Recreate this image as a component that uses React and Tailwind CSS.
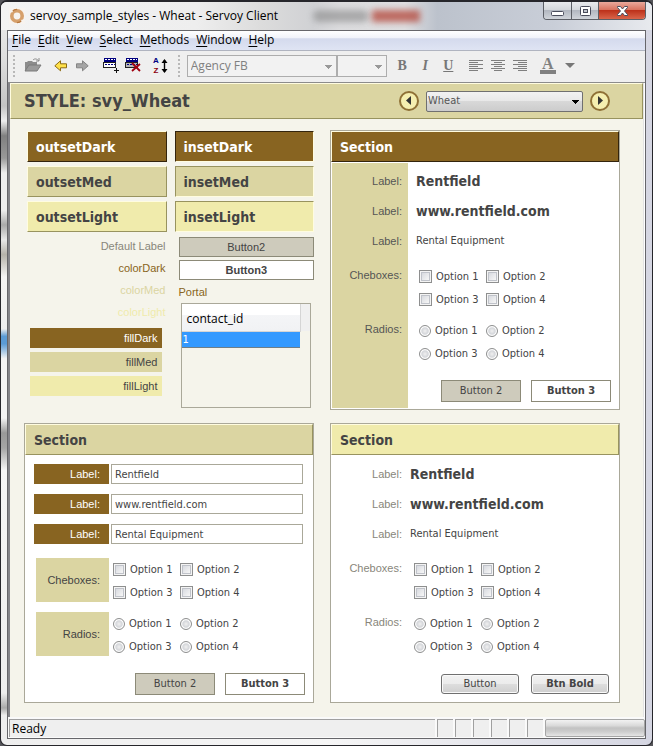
import { useState } from 'react';
import clsx from 'clsx';

const MENUS = ['File', 'Edit', 'View', 'Select', 'Methods', 'Window', 'Help'];
const OPTIONS = ['Option 1', 'Option 2', 'Option 3', 'Option 4'];

const FIELDS = [
  { name: 'name', value: 'Rentfield', big: true },
  { name: 'site', value: 'www.rentfield.com', big: true },
  { name: 'type', value: 'Rental Equipment', big: false },
];

const UI_FONT = "font-['Open_Sans','Noto_Sans',sans-serif]";
const TAHOMA = "font-['DejaVu_Sans_Condensed','DejaVu_Sans',sans-serif]";
const ARIAL = "font-['Liberation_Sans',Arial,sans-serif]";

const OUTSET = {
  dark: 'bg-[#886421] text-white border-t-[#fffce0] border-l-[#fffce0] border-b-[#33240d] border-r-[#33240d]',
  med: 'bg-[#dbd5a2] text-[#444] border-t-[#fffce0] border-l-[#fffce0] border-b-[#98935f] border-r-[#98935f]',
  light: 'bg-[#f0ebac] text-[#444] border-t-[#fffce0] border-l-[#fffce0] border-b-[#98935f] border-r-[#98935f]',
};

const INSET = {
  dark: 'bg-[#886421] text-white border-b-[#fffce0] border-r-[#fffce0] border-t-[#33240d] border-l-[#33240d]',
  med: 'bg-[#dbd5a2] text-[#444] border-b-[#fffce0] border-r-[#fffce0] border-t-[#98935f] border-l-[#98935f]',
  light: 'bg-[#f0ebac] text-[#444] border-b-[#fffce0] border-r-[#fffce0] border-t-[#98935f] border-l-[#98935f]',
};

const Caret = ({ className }) => (
  <svg viewBox="0 0 8 4" className={clsx('w-2 h-1', className)} fill="currentColor" shapeRendering="crispEdges">
    <path d="M0 0h8L4 4z" />
  </svg>
);

const Grip = () => (
  <svg width="3" height="22" fill="#b8b8b8" shapeRendering="crispEdges" className="shrink-0">
    {[0, 4, 8, 12, 16, 20].map((y) => <rect key={y} x="0" y={y} width="2" height="2" />)}
  </svg>
);

const ToolButton = ({ label, children, className }) => (
  <button type="button" aria-label={label} className={clsx('shrink-0 flex items-center justify-center', className)}>
    {children}
  </button>
);

const TitleBar = () => (
  <div className="h-7 flex items-start justify-between pl-2 pr-[6px] rounded-t-[6px] bg-[linear-gradient(90deg,#f3f3f3_0%,#eeeeee_30%,#dcdcdc_40%,#d0d1d4_48%,#dcdcde_52%,#dedee0_62%,#bcc2cc_67%,#c9ced8_85%,#e8eaee_100%)] relative overflow-hidden">
    {/* glass blur of whatever is behind the window */}
    <div className="absolute left-[48%] top-2 w-14 h-3 rounded-full bg-[#777] opacity-50 blur-[3px]" />
    <div className="absolute left-[57%] top-2 w-12 h-3 bg-[#b03a2c] opacity-70 blur-[3px]" />
    <div className="relative flex items-center gap-[5px] h-[27px]">
      <svg width="16" height="16" viewBox="0 0 16 16">
        <rect width="16" height="16" fill="#f7f3ef" />
        <circle cx="8" cy="8" r="5.2" fill="none" stroke="#d6a06c" strokeWidth="3.6" />
        <path d="M3.2 3.4A6.6 6.6 0 0 1 8 1.4M12.8 12.6A6.6 6.6 0 0 1 8 14.6" fill="none" stroke="#b87a42" strokeWidth="1.2" />
        <path d="M0 5l3-4 1 3zM16 11l-3 4-1-3z" fill="#f7f3ef" />
      </svg>
      <span className={clsx(UI_FONT, 'text-xs text-black whitespace-nowrap')}>servoy_sample_styles - Wheat - Servoy Client</span>
    </div>
    <div className="relative flex h-[18px] border border-t-0 border-[#5c5f66] rounded-b-[4px] overflow-hidden">
      <button type="button" aria-label="Minimize" className="w-7 flex items-center justify-center border-r border-[#5c5f66] bg-[linear-gradient(#e9ebee_0%,#d3d6db_48%,#b3b8c1_50%,#d0d4da_100%)]">
        <svg width="13" height="12" viewBox="0 0 13 12"><rect x=".5" y="6.5" width="12" height="4" rx="1" fill="#fff" stroke="#4a4d5c" /></svg>
      </button>
      <button type="button" aria-label="Maximize" className="w-[27px] flex items-center justify-center border-r border-[#5c5f66] bg-[linear-gradient(#e9ebee_0%,#d3d6db_48%,#b3b8c1_50%,#d0d4da_100%)]">
        <svg width="13" height="12" viewBox="0 0 13 12">
          <rect x="1.5" y="1.5" width="10" height="9" rx="1" fill="#fff" stroke="#4a4d5c" />
          <rect x="4.5" y="4.5" width="4" height="3" fill="#c0c4cc" stroke="#4a4d5c" />
        </svg>
      </button>
      <button type="button" aria-label="Close" className="w-[46px] flex items-center justify-center bg-[linear-gradient(#e9a99c_0%,#d7705c_48%,#bd321b_50%,#d9654a_100%)]">
        <svg width="13" height="12" viewBox="0 0 13 12">
          <path d="M1.5 1.5h3L6.500 4l2-2.500h3v1L8.500 6l3 3.500v1h-3L6.500 8l-2 2.500h-3v-1L4.500 6l-3-3.500z" fill="#fff" stroke="#4a4d5c" />
        </svg>
      </button>
    </div>
  </div>
);

const MenuBar = () => (
  <nav className={clsx(UI_FONT, 'h-5 flex items-center gap-[7px] px-1 pb-px text-xs text-black border-b border-[#b0b4c0] bg-[linear-gradient(#ffffff_0%,#f0f2f9_38%,#d4daed_40%,#dfe4f3_100%)]')}>
    {MENUS.map((menu) => (
      <button key={menu} type="button" className="leading-4">
        <span className="underline underline-offset-2">{menu[0]}</span>{menu.slice(1)}
      </button>
    ))}
  </nav>
);

const AlignIcon = ({ rows }) => (
  <svg width="14" height="12" stroke="#7f7f7f" shapeRendering="crispEdges">
    {rows.map(([x1, x2], i) => <path key={i} d={`M${x1} ${i * 2 + 0.5}H${x2}`} />)}
  </svg>
);

const FormIcon = ({ remove }) => (
  <svg width="17" height="16" viewBox="0 0 17 16" shapeRendering="crispEdges">
    <rect x="2" y="0" width="12" height="4" fill="#000080" />
    <path d="M3 1.500h10" stroke="#fff" strokeDasharray="2 1" />
    <rect x="1.500" y="4.500" width="12" height="5" fill={remove ? '#b8b8b8' : '#fff'} stroke="#222" />
    <path d="M3 6.500h10" stroke="#000080" strokeDasharray="2 1" />
    {remove
      ? <path d="M8 5l8 8M16 6l-8 7" stroke="#a00010" strokeWidth="1.800" shapeRendering="auto" />
      : <path d="M14.500 10v5M12 12.500h5" stroke="#111" />}
  </svg>
);

const Toolbar = () => (
  <div className="h-8 flex items-center pl-[5px] pb-[2px] bg-[#efefef] border-b border-[#8c8c8c]">
    <Grip />
    <ToolButton label="Open" className="ml-2">
      <svg width="18" height="15" viewBox="0 0 18 15">
        <path d="M1 13V4h2l1-1h4l1 1h4v3" fill="#8c8c8c" />
        <path d="M1 13L5 7h12l-4 6z" fill="#9a9a9a" stroke="#7b7b7b" />
        <path d="M9 2c2-2 4-1 6 1M15 0v3h-3" fill="none" stroke="#8c8c8c" />
      </svg>
    </ToolButton>
    <ToolButton label="Back" className="ml-3">
      <svg width="13" height="12" viewBox="0 0 13 12">
        <path d="M6.500.8v3h6v4h-6v3L.8 5.800z" fill="#ffe14a" stroke="#8a6a14" />
      </svg>
    </ToolButton>
    <ToolButton label="Forward" className="ml-[9px]">
      <svg width="13" height="12" viewBox="0 0 13 12">
        <path d="M6.500.8v3h-6v4h6v3l5.700-5z" fill="#a5a5a5" stroke="#848484" />
      </svg>
    </ToolButton>
    <ToolButton label="New record" className="ml-[13px]"><FormIcon /></ToolButton>
    <ToolButton label="Delete record" className="ml-[5px]"><FormIcon remove /></ToolButton>
    <ToolButton label="Sort" className="ml-3 gap-[2px]">
      <span className={clsx(ARIAL, 'flex flex-col text-[8px] leading-[10px] font-bold')}>
        <span className="text-[#000080]">A</span>
        <span className="text-[#8b0010]">Z</span>
      </span>
      <svg width="7" height="16" viewBox="0 0 7 16">
        <path d="M3.500 2v12" stroke="#000" strokeWidth="1.400" />
        <path d="M.5 5l3-4 3 4zM.5 11l3 4 3-4z" fill="#000" />
      </svg>
    </ToolButton>
    <div className="ml-[10px] flex"><Grip /></div>
    <div className="relative ml-[6px] flex-[0_1_150px] min-w-0">
      <select aria-label="Font" disabled className={clsx(UI_FONT, 'block appearance-none w-full h-[22px] pl-[3px] text-xs leading-4 text-[#808080] bg-[#f2f2f2] border border-[#adadad] opacity-100')}>
        <option>Agency FB</option>
      </select>
      <Caret className="absolute right-[5px] top-[10px] text-[#999]" />
    </div>
    <div className="relative flex-[0_1_50px] min-w-0">
      <select aria-label="Font size" disabled className="block appearance-none w-full h-[22px] bg-[#f2f2f2] border border-[#adadad] opacity-100">
        <option> </option>
      </select>
      <Caret className="absolute right-[5px] top-[10px] text-[#999]" />
    </div>
    <div className="flex items-center ml-[10px] gap-3 font-['Liberation_Serif',serif] text-sm leading-4 font-bold text-[#777]">
      <ToolButton label="Bold" className="w-[11px]">B</ToolButton>
      <ToolButton label="Italic" className="w-[11px] italic">I</ToolButton>
      <ToolButton label="Underline" className="w-[11px] underline">U</ToolButton>
    </div>
    <div className="flex items-center ml-[15px] gap-2">
      <ToolButton label="Align left"><AlignIcon rows={[[0, 14], [0, 9], [0, 14], [0, 9], [0, 14], [0, 9]]} /></ToolButton>
      <ToolButton label="Align center"><AlignIcon rows={[[0, 14], [3, 11], [0, 14], [3, 11], [0, 14], [3, 11]]} /></ToolButton>
      <ToolButton label="Align right"><AlignIcon rows={[[0, 14], [5, 14], [0, 14], [5, 14], [0, 14], [5, 14]]} /></ToolButton>
    </div>
    <ToolButton label="Text color" className="ml-[13px] w-4 h-4 border-b-4 border-[#808080] font-['Liberation_Serif',serif] text-base leading-3 font-bold text-[#808080]">A</ToolButton>
    <ToolButton label="More colors" className="ml-[9px] text-[#777]">
      <svg width="10" height="5" fill="currentColor"><path d="M0 0h10L5 5z" /></svg>
    </ToolButton>
  </div>
);

const RoundButton = ({ label, path }) => (
  <button type="button" aria-label={label} className="w-5 h-5 rounded-full border-2 border-[#8f7136] bg-[#f5efb0] flex items-center justify-center">
    <svg width="6" height="10" viewBox="0 0 6 10" fill="#333"><path d={path} /></svg>
  </button>
);

const StyleHeader = () => {
  const [style, setStyle] = useState('Wheat');
  return (
    <header className="h-9 flex items-center justify-between pl-[13px] pr-8 bg-[#dbd5a2] border border-t-[#fffce0] border-l-[#fffce0] border-b-[#98935f] border-r-[#98935f]">
      <h1 className={clsx(TAHOMA, 'text-lg font-bold text-[#444] whitespace-nowrap')}>STYLE: svy_Wheat</h1>
      <div className="flex items-center gap-[7px]">
        <RoundButton label="Previous style" path="M5 0v9L0 4.500z" />
        <div className="relative w-[157px]">
          <select
            aria-label="Style"
            value={style}
            onChange={(e) => setStyle(e.target.value)}
            className={clsx(TAHOMA, 'block appearance-none w-full h-[21px] pl-px text-[11px] leading-4 text-[#555] border border-[#707070] rounded-[2px] bg-[linear-gradient(#f2f2f2_0%,#e8e8e8_48%,#d8d8d8_50%,#cccccc_100%)]')}
          >
            <option>Wheat</option>
          </select>
          <Caret className="absolute right-1 top-[9px] text-black pointer-events-none" />
        </div>
        <RoundButton label="Next style" path="M1 0v9l5-4.500z" />
      </div>
    </header>
  );
};

const Swatch = ({ tone, inset, children }) => (
  <div className={clsx(TAHOMA, 'h-[31px] flex items-center pl-2 border text-sm font-bold', inset ? INSET[tone] : OUTSET[tone])}>
    {children}
  </div>
);

const FlatButton = ({ bold, children, className }) => (
  <button
    type="button"
    className={clsx(
      'border border-[#8c8a78] text-[11px] leading-4 text-[#444]',
      bold ? 'bg-white font-bold' : 'bg-[#cecbbc]',
      className
    )}
  >
    {children}
  </button>
);

const NativeButton = ({ bold, children }) => (
  <button
    type="button"
    className={clsx(
      'w-[78px] h-5 border border-[#707070] rounded-[3px] text-[11px] leading-4 text-[#444] shadow-[inset_0_0_0_1px_#fafafa] bg-[linear-gradient(#f2f2f2_0%,#ebebeb_50%,#dddddd_52%,#cfcfcf_100%)]',
      bold && 'font-bold'
    )}
  >
    {children}
  </button>
);

const StyleSamples = () => (
  <div className="flex gap-2 pl-[3px] pt-px">
    <div className="flex-1 flex flex-col">
      <div className="flex flex-col gap-1">
        <Swatch tone="dark">outsetDark</Swatch>
        <Swatch tone="med">outsetMed</Swatch>
        <Swatch tone="light">outsetLight</Swatch>
      </div>
      <div className={clsx(ARIAL, 'mt-[6px] flex flex-col gap-[6px] pr-px text-right text-[11px] leading-4')}>
        <span className="text-[#88867a]">Default Label</span>
        <span className="text-[#886421]">colorDark</span>
        <span className="text-[#dbd5a2]">colorMed</span>
        <span className="text-[#f0ebac]">colorLight</span>
      </div>
      <div className={clsx(ARIAL, 'mt-2 ml-[3px] mr-[5px] flex flex-col gap-1 text-right text-[11px] leading-5 text-[#444]')}>
        <span className="pr-1 bg-[#886421] text-white">fillDark</span>
        <span className="pr-1 bg-[#dbd5a2]">fillMed</span>
        <span className="pr-1 bg-[#f0ebac]">fillLight</span>
      </div>
    </div>
    <div className="flex-1 flex flex-col">
      <div className="flex flex-col gap-1">
        <Swatch tone="dark" inset>insetDark</Swatch>
        <Swatch tone="med" inset>insetMed</Swatch>
        <Swatch tone="light" inset>insetLight</Swatch>
      </div>
      <div className={clsx(ARIAL, 'mt-[5px] pl-1 flex flex-col gap-[3px]')}>
        <FlatButton className="h-5">Button2</FlatButton>
        <FlatButton bold className="h-5">Button3</FlatButton>
        <span className="mt-px text-[11px] leading-4 text-[#886421]">Portal</span>
      </div>
      <div className="mt-[3px] ml-[6px] mr-[3px] h-[105px] border border-[#aaa899]">
        <table className="w-full border-collapse">
          <thead>
            <tr className="h-[27px] bg-[#f0f0f0]">
              <th className={clsx(UI_FONT, 'pl-[5px] pt-1 text-left text-xs leading-4 font-normal text-black border-r border-b border-[#d5d5d5] bg-[linear-gradient(#ffffff_0%,#ffffff_40%,#f4f5f7_42%,#f1f2f4_100%)]')}>contact_id</th>
              <td className="w-[10px]" />
            </tr>
          </thead>
          <tbody>
            <tr className="h-4">
              <td className={clsx(TAHOMA, 'pl-px text-[11px] leading-[15px] text-white bg-[#3399ff] border-b border-[#6f7e88]')}>1</td>
              <td />
            </tr>
          </tbody>
        </table>
      </div>
    </div>
  </div>
);

const OptionGroup = ({ type, name, className }) => (
  <div role="group" aria-label={name} className={clsx(TAHOMA, 'grid grid-cols-[67px_67px] auto-rows-[23px] items-center text-[11px] leading-4 text-[#444]', className)}>
    {OPTIONS.map((option) => (
      <label key={option} className="flex items-center gap-1 whitespace-nowrap">
        <input
          type={type}
          name={name}
          className={clsx(
            'appearance-none shrink-0 border border-[#8e8f8f] checked:bg-[#886421]',
            type === 'radio'
              ? 'w-3 h-3 rounded-full bg-[radial-gradient(circle,#f0f0f0_0%,#d4d6da_45%,#ffffff_62%,#c9cbd0_100%)]'
              : 'w-[13px] h-[13px] shadow-[inset_0_0_0_1px_#f4f4f4,inset_0_0_0_2px_#c0c3ca] bg-[linear-gradient(135deg,#cfd2d9_0%,#f6f6f6_80%)]'
          )}
        />
        {option}
      </label>
    ))}
  </div>
);

const Section = ({ tone, band, children }) => (
  <section className="border border-[#aaa899] bg-white">
    <h2 className={clsx(TAHOMA, 'h-[31px] flex items-center pl-2 border text-sm font-bold', OUTSET[tone])}>Section</h2>
    <div className={clsx('pt-[9px] pb-[7px] pr-2', band && 'bg-[linear-gradient(#dbd5a2,#dbd5a2)] bg-no-repeat bg-[length:76px_calc(100%-2px)] bg-[position:1px_1px]')}>
      {children}
    </div>
  </section>
);

// Read-only record view: plain text values, labels in a right aligned column
const DisplaySection = ({ id, tone, band, native }) => {
  const label = clsx(ARIAL, 'w-[71px] shrink-0 text-right text-[11px] leading-5', band ? 'text-[#555]' : 'text-[#88867a]');
  const indent = band ? 'ml-[17px]' : 'ml-3';
  return (
    <Section tone={tone} band={band}>
      <dl className="flex flex-col gap-[10px]">
        {FIELDS.map((field) => (
          <div key={field.name} className="flex">
            <dt className={label}>Label:</dt>
            <dd className={clsx(TAHOMA, 'text-[#444] leading-5', field.big ? 'text-sm font-bold' : 'text-[11px]', band ? 'ml-[14px]' : 'ml-2')}>{field.value}</dd>
          </div>
        ))}
      </dl>
      <div className="mt-[14px] flex flex-col gap-2">
        <div className="flex">
          <span className={label}>Cheboxes:</span>
          <OptionGroup type="checkbox" name={`${id}-checks`} className={indent} />
        </div>
        <div className="flex">
          <span className={label}>Radios:</span>
          <OptionGroup type="radio" name={`${id}-radios`} className={indent} />
        </div>
      </div>
      <div className={clsx(TAHOMA, 'mt-[15px] h-[22px] flex items-center justify-end')}>
        {native ? (
          <div className="flex gap-3 pr-[2px]">
            <NativeButton>Button</NativeButton>
            <NativeButton bold>Btn Bold</NativeButton>
          </div>
        ) : (
          <div className="flex gap-[10px]">
            <FlatButton className="w-20 h-[22px]">Button 2</FlatButton>
            <FlatButton bold className="w-20 h-[22px]">Button 3</FlatButton>
          </div>
        )}
      </div>
    </Section>
  );
};

const EditSection = () => {
  const groupLabel = clsx(ARIAL, 'w-[73px] h-11 shrink-0 pr-[9px] text-right text-[11px] leading-[44px] text-[#444] bg-[#dbd5a2]');
  return (
    <Section tone="med">
      <div className="flex flex-col gap-[10px] pl-[9px] pr-[2px]">
        {FIELDS.map((field) => (
          <div key={field.name} className="flex gap-[2px]">
            <label htmlFor={field.name} className={clsx(ARIAL, 'w-[75px] shrink-0 pr-[9px] text-right text-[11px] leading-5 text-white bg-[#886421]')}>Label:</label>
            <input id={field.name} type="text" defaultValue={field.value} className={clsx(TAHOMA, 'flex-1 min-w-0 h-5 pl-[3px] border border-[#aaa899] bg-white text-[11px] leading-4 text-[#444]')} />
          </div>
        ))}
      </div>
      <div className="mt-[14px] pl-[11px] flex flex-col gap-2">
        <div className="flex">
          <span className={groupLabel}>Cheboxes:</span>
          <OptionGroup type="checkbox" name="edit-checks" className="ml-1" />
        </div>
        <div className="flex">
          <span className={groupLabel}>Radios:</span>
          <OptionGroup type="radio" name="edit-radios" className="ml-1" />
        </div>
      </div>
      <div className={clsx(TAHOMA, 'mt-[15px] flex justify-end gap-[10px]')}>
        <FlatButton className="w-20 h-[22px]">Button 2</FlatButton>
        <FlatButton bold className="w-20 h-[22px]">Button 3</FlatButton>
      </div>
    </Section>
  );
};

const StatusBar = () => (
  <footer className="h-[21px] flex gap-[2px] pt-[2px] pl-px bg-[#fafafa]">
    <div className={clsx(UI_FONT, 'flex-1 h-[18px] pl-[2px] text-xs leading-[17px] text-black bg-[#efefef] border-t border-l border-[#a0a0a0]')}>Ready</div>
    {[0, 1, 2, 3, 4, 5].map((cell) => (
      <div key={cell} className="w-4 h-[18px] bg-[#efefef] border-t border-l border-[#a0a0a0]" />
    ))}
    <div className="w-[100px] h-[18px] rounded-[2px] border border-[#a5a5a5] bg-[linear-gradient(#f2f2f2_0%,#dadada_35%,#c2c2c2_50%,#cbcbcb_70%,#e4e4e4_100%)]" />
  </footer>
);

export default function App() {
  return (
    <div className="min-h-screen bg-[#55555a] flex flex-col">
      <div className="flex-1 flex flex-col border border-t-2 border-[#26262b] rounded-[7px] bg-[linear-gradient(180deg,#eeeeee_0%,#dddddd_8%,#c4c4c4_14%,#eeeeee_16%,#808080_18%,#999999_21%,#eeeeee_23%,#eeeeee_28%,#aaaaaa_30%,#e8e8e8_32%,#b5b2aa_34%,#f4f4f4_37%,#eeeeee_44%,#5b9bd5_45%,#5b9bd5_46%,#f4f4f4_48%,#f4f4f4_56%,#999999_58%,#a5a5a5_60%,#f6f6f6_63%,#eeeeee_93%,#aaaaaa_95%,#eeeeee_96%),linear-gradient(90deg,#eeeeee_0%,#f6f6f6_50%,#d5d6e2_100%)] bg-[length:6px_100%,100%_100%] bg-no-repeat">
        <TitleBar />
        <div className="flex-1 flex flex-col mx-[6px] mb-[6px] border border-[#66666a] bg-white">
          <MenuBar />
          <Toolbar />
          <main className="flex-1 flex flex-col border-l-2 border-r border-l-[#85858a] border-r-[#e3e3e3] mr-px bg-[#f5f4eb]">
            <StyleHeader />
            <div className="grid grid-cols-2 gap-x-4 gap-y-[13px] pt-[11px] pb-[14px] pl-[14px] pr-[23px]">
              <StyleSamples />
              <DisplaySection id="dark" tone="dark" band />
              <EditSection />
              <DisplaySection id="light" tone="light" native />
            </div>
          </main>
          <StatusBar />
        </div>
      </div>
    </div>
  );
}
